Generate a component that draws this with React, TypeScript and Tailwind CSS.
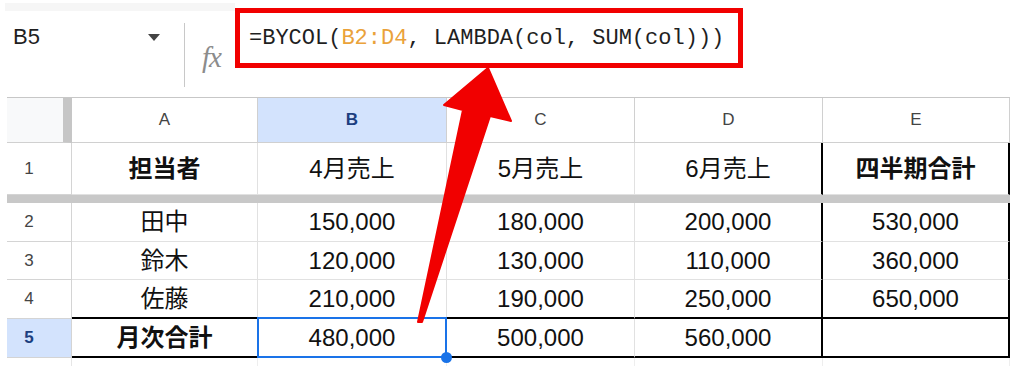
import React from 'react';

interface Row {
  n: string;
  a: string;
  b: string;
  c: string;
  d: string;
  e: string;
}

const rows: Row[] = [
  { n: '2', a: '田中', b: '150,000', c: '180,000', d: '200,000', e: '530,000' },
  { n: '3', a: '鈴木', b: '120,000', c: '130,000', d: '110,000', e: '360,000' },
  { n: '4', a: '佐藤', b: '210,000', c: '190,000', d: '250,000', e: '650,000' },
];

const heights = ['h-[39px]', 'h-[38px]', 'h-[39px]'];

const cell = 'flex items-center justify-center border-r border-b border-[#e1e1e1] text-[24px] text-[#111]';
const rowHead = 'flex items-center justify-center pr-[20px] border-r border-b border-[#d4d4d4] text-[17px] text-[#444]';
const colHead = 'h-[45px] flex items-center justify-center border-r border-b border-[#d0d0d0] text-[17px] text-[#444]';

const App: React.FC = () => {
  return (
    <div className="relative w-[1024px] h-[375px] overflow-hidden bg-white font-['Liberation_Sans','Noto_Sans_CJK_JP',sans-serif]">
      {/* formula bar */}
      <div className="flex h-[97px]">
        <div className="w-[235px] flex flex-col">
          <div className="mt-[3px] ml-[5px] h-[8px] bg-[#f6f6f6]" />
          <div className="flex -mt-[11px]">
            <div className="w-[184px] flex items-start">
              <span className="ml-[13px] mt-[24px] text-[22px] leading-[26px] text-[#1f1f1f]">B5</span>
              <svg className="ml-auto mr-[24px] mt-[34px]" width="12" height="8" viewBox="0 0 12 8">
                <path d="M0 0 L12 0 L6 7 Z" fill="#444" />
              </svg>
            </div>
            <div className="w-px h-[64px] mt-[23px] bg-[#c8c8c8]" />
            <span className="w-[32px] ml-[17px] mt-[44px] font-['Liberation_Serif',serif] italic text-[29px] leading-[26px] tracking-[-1px] text-[#8c8c8c]">
              fx
            </span>
          </div>
        </div>
        <div className="mt-[8px] w-[508px] h-[60px] border-[5px] border-[#f10000] flex items-center pl-[9px]">
          <span className="font-['Liberation_Mono',monospace] text-[22px] text-[#1f1f1f] whitespace-pre">
            =BYCOL(<span className="text-[#eaa23a]">B2:D4</span>, LAMBDA(col, SUM(col)))
          </span>
        </div>
      </div>

      {/* sheet grid */}
      <div className="ml-[7px] w-[1003px] border-t border-[#c7c7c7] grid grid-cols-[65px_186px_189px_188px_188px_187px]">
        <div className="h-[45px] bg-[#f8f9fa] border-b border-[#d0d0d0] border-r-[9px] border-r-[#c6c6c6]" />
        <div className={colHead}>A</div>
        <div className="h-[45px] flex items-center justify-center border-r border-b border-[#d0d0d0] bg-[#d3e3fd] text-[17px] font-bold text-[#1c3f80]">B</div>
        <div className={colHead}>C</div>
        <div className={colHead}>D</div>
        <div className={colHead}>E</div>

        <div className={`${rowHead} h-[52px]`}>1</div>
        <div className={`${cell} h-[52px] font-bold`}>担当者</div>
        <div className={`${cell} h-[52px]`}>4月売上</div>
        <div className={`${cell} h-[52px]`}>5月売上</div>
        <div className={`${cell} h-[52px] border-r-2 border-r-black`}>6月売上</div>
        <div className={`${cell} h-[52px] font-bold border-r-2 border-r-black`}>四半期合計</div>

        <div className="col-span-6 h-[8px] bg-[#c8c8c8]" />

        {rows.map((r, i) => {
          const last = i === rows.length - 1;
          const h = heights[i];
          const bb = last ? 'border-b-2 border-b-black' : '';
          return (
            <React.Fragment key={r.n}>
              <div className={`${rowHead} ${h}`}>{r.n}</div>
              <div className={`${cell} ${h} ${bb}`}>{r.a}</div>
              <div className={`${cell} ${h} ${bb}`}>{r.b}</div>
              <div className={`${cell} ${h} ${bb}`}>{r.c}</div>
              <div className={`${cell} ${h} ${bb} border-r-2 border-r-black`}>{r.d}</div>
              <div className={`${cell} ${h} ${bb} border-r-2 border-r-black`}>{r.e}</div>
            </React.Fragment>
          );
        })}

        <div className="h-[39px] flex items-center justify-center pr-[20px] border-r border-b border-[#d4d4d4] bg-[#d3e3fd] text-[17px] font-bold text-[#1c3f80]">5</div>
        <div className={`${cell} h-[39px] font-bold border-b-2 border-b-black`}>月次合計</div>
        <div className={`${cell} h-[39px] relative border-b-2 border-b-black`}>
          480,000
          <div className="absolute -top-[2px] -left-px -right-px -bottom-[2px] border-2 border-[#1a73e8]" />
          <div className="absolute -right-[6px] -bottom-[7px] w-[11px] h-[11px] rounded-full bg-[#1a73e8]" />
        </div>
        <div className={`${cell} h-[39px] border-b-2 border-b-black`}>500,000</div>
        <div className={`${cell} h-[39px] border-b-2 border-b-black border-r-2 border-r-black`}>560,000</div>
        <div className={`${cell} h-[39px] border-b-2 border-b-black border-r-2 border-r-black`} />

        <div className="h-[8px] border-r border-[#e6e6e6]" />
        <div className="h-[8px] border-r border-[#eeeeee]" />
        <div className="h-[8px] border-r border-[#eeeeee]" />
        <div className="h-[8px] border-r border-[#eeeeee]" />
        <div className="h-[8px] border-r border-[#eeeeee]" />
        <div className="h-[8px] border-r border-[#eeeeee]" />
      </div>

      {/* callout arrow */}
      <svg className="absolute left-0 top-0 pointer-events-none" width="1024" height="375" viewBox="0 0 1024 375">
        <polygon
          points="488,68 511,121 490,116 422,322 418,322 463,110 444,105"
          fill="#f10000"
          stroke="#f10000"
          strokeWidth="2"
          strokeLinejoin="round"
        />
      </svg>
    </div>
  );
};

export default App;
